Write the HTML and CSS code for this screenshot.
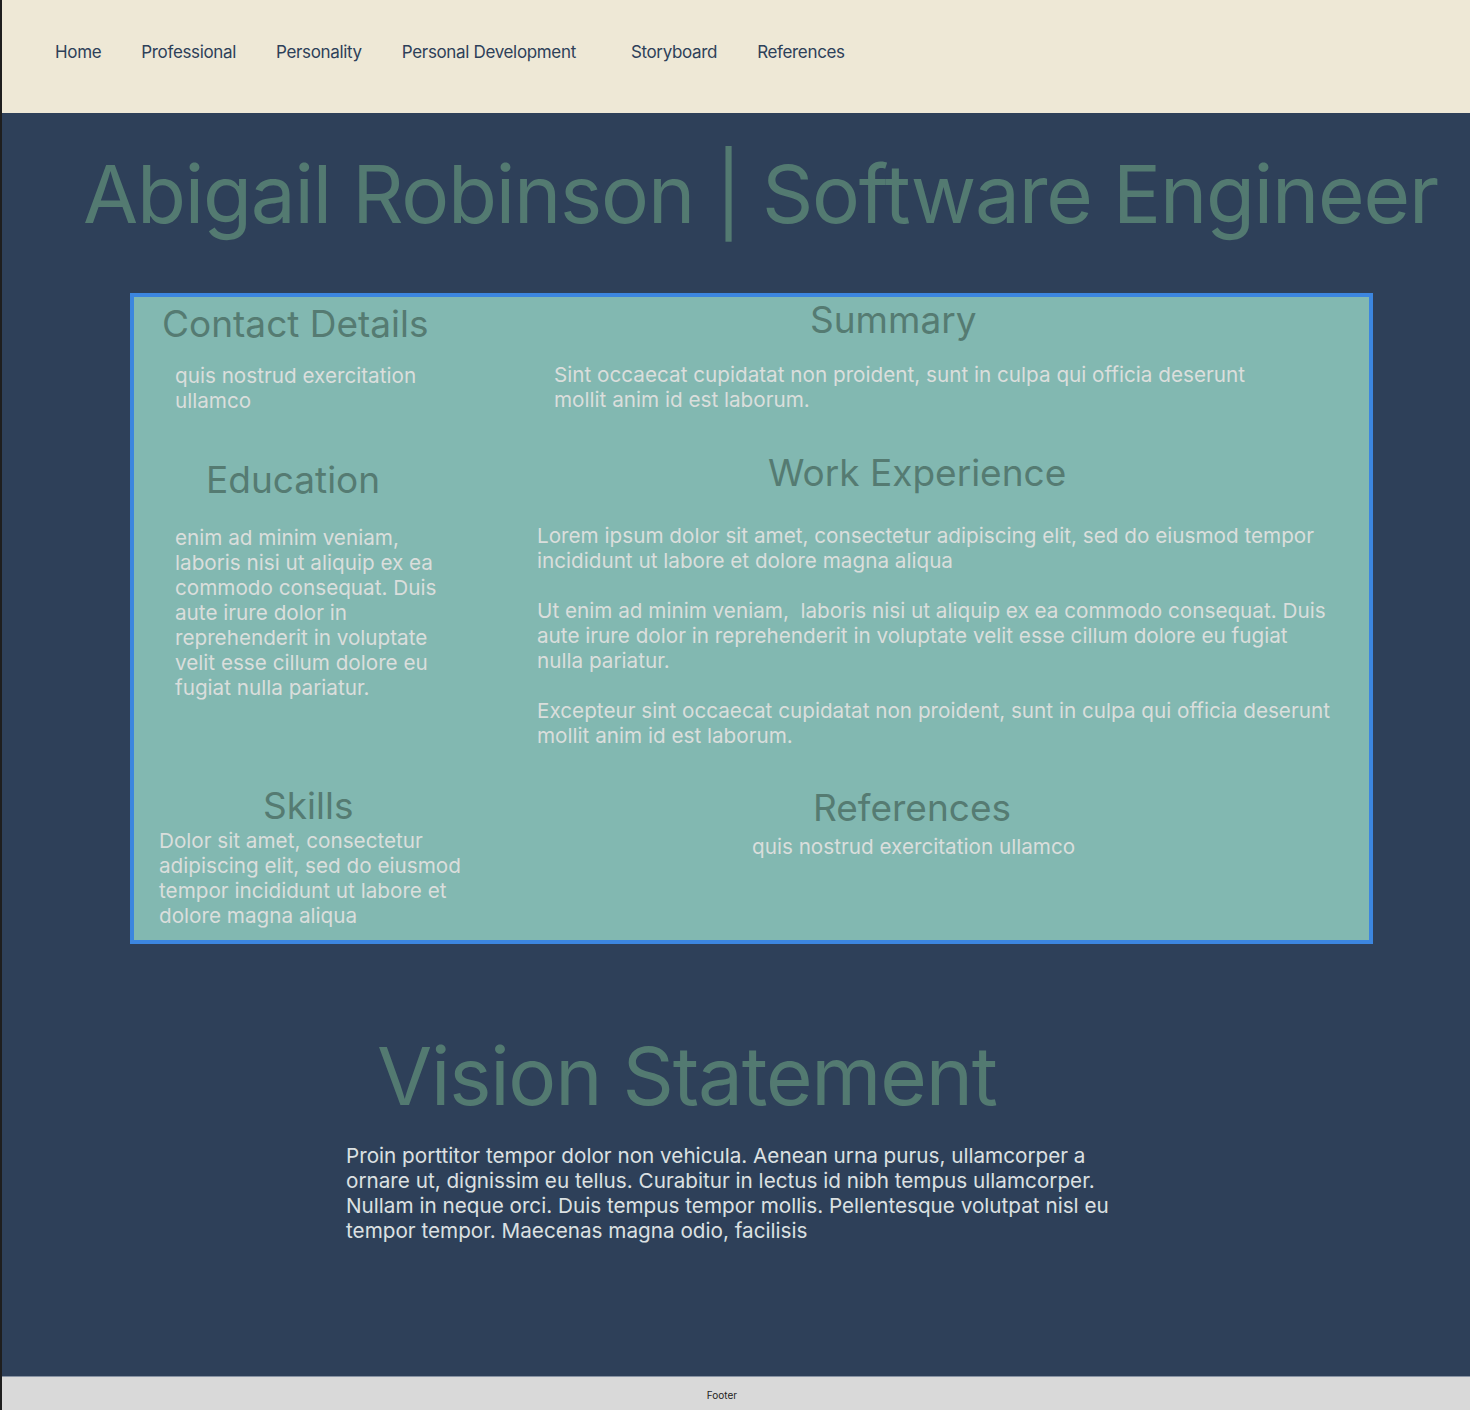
FILE: index.html
```html
<!DOCTYPE html>
<html lang="en">
<head>
<meta charset="utf-8">
<title>Abigail Robinson | Software Engineer</title>
<link rel="stylesheet" href="styles.css">
</head>
<body>
<div class="page">
  <nav class="nav">
    <a class="nav-link" href="#">Home</a>
    <a class="nav-link" href="#">Professional</a>
    <a class="nav-link" href="#">Personality</a>
    <a class="nav-link nav-link-wide" href="#">Personal Development</a>
    <a class="nav-link" href="#">Storyboard</a>
    <a class="nav-link" href="#">References</a>
  </nav>
  <main class="main">
    <h1 class="title">Abigail Robinson | Software Engineer</h1>
    <section class="card">
      <div class="col col-left">
        <h2 class="heading h-contact">Contact Details</h2>
        <p class="text t-contact">quis nostrud exercitation ullamco</p>
        <h2 class="heading h-education">Education</h2>
        <p class="text t-education">enim ad minim veniam, laboris nisi ut aliquip ex ea commodo consequat. Duis aute irure dolor in reprehenderit in voluptate velit esse cillum dolore eu fugiat nulla pariatur.</p>
        <h2 class="heading h-skills">Skills</h2>
        <p class="text t-skills">Dolor sit amet, consectetur adipiscing elit, sed do eiusmod tempor incididunt ut labore et dolore magna aliqua</p>
      </div>
      <div class="col col-right">
        <h2 class="heading h-summary">Summary</h2>
        <p class="text t-summary">Sint occaecat cupidatat non proident, sunt in culpa qui officia deserunt mollit anim id est laborum.</p>
        <h2 class="heading h-work">Work Experience</h2>
        <div class="t-work">
          <p class="text">Lorem ipsum dolor sit amet, consectetur adipiscing elit, sed do eiusmod tempor incididunt ut labore et dolore magna aliqua</p>
          <p class="text">Ut enim ad minim veniam,&nbsp; laboris nisi ut aliquip ex ea commodo consequat. Duis aute irure dolor in reprehenderit in voluptate velit esse cillum dolore eu fugiat nulla pariatur.</p>
          <p class="text">Excepteur sint occaecat cupidatat non proident, sunt in culpa qui officia deserunt mollit anim id est laborum.</p>
        </div>
        <h2 class="heading h-refs">References</h2>
        <p class="text t-refs">quis nostrud exercitation ullamco</p>
      </div>
    </section>
    <section class="vision">
      <h2 class="vision-title">Vision Statement</h2>
      <p class="vision-text">Proin porttitor tempor dolor non vehicula. Aenean urna purus, ullamcorper a ornare ut, dignissim eu tellus. Curabitur in lectus id nibh tempus ullamcorper. Nullam in neque orci. Duis tempus tempor mollis. Pellentesque volutpat nisl eu tempor tempor. Maecenas magna odio, facilisis</p>
    </section>
  </main>
  <footer class="footer">Footer</footer>
</div>
</body>
</html>
```
FILE: styles.css
```css
* { box-sizing: border-box; }

html, body {
  margin: 0;
  padding: 0;
}

body {
  background: #1e1e1e;
  font-family: Inter, "Noto Sans", "Liberation Sans", sans-serif;
}

.page {
  margin-left: 2px;
  width: 1468px;
}

/* Nav */
.nav {
  height: 113px;
  background: #EEE8D6;
  display: flex;
  align-items: flex-start;
  gap: 40px;
  padding: 42px 0 0 53px;
}

.nav-link {
  font-size: 17px;
  line-height: 21px;
  letter-spacing: -0.02em;
  color: #2D4059;
  text-decoration: none;
}

.nav-link-wide {
  margin-right: 15px;
}

/* Main */
.main {
  height: 1263px;
  background: #2E4059;
  padding-top: 33px;
  overflow: hidden;
}

.title {
  margin: 0;
  padding-left: 81px;
  font-size: 80px;
  line-height: 96px;
  letter-spacing: -0.015em;
  font-weight: 400;
  color: #537A71;
  white-space: nowrap;
}

/* Card */
.card {
  margin: 51px 0 0 128px;
  width: 1243px;
  height: 651px;
  border: 4px solid #3C86DF;
  background: #82B8B1;
  display: grid;
  grid-template-columns: 390px 1fr;
}

.col {
  display: flex;
  flex-direction: column;
  align-items: flex-start;
}

.heading {
  margin: 0;
  font-size: 37px;
  line-height: 47px;
  font-weight: 400;
  color: #557B72;
  white-space: nowrap;
}

.text {
  margin: 0;
  font-size: 20.7px;
  line-height: 25px;
  color: #DADEDC;
}

/* left column */
.h-contact { margin-top: 3px; padding-left: 28px; }
.t-contact { margin-top: 16px; padding-left: 41px; width: 321px; }
.h-education { margin-top: 43px; padding-left: 72px; }
.t-education { margin-top: 22px; padding-left: 41px; width: 321px; }
.h-skills { margin-top: 82px; padding-left: 129px; }
.t-skills { margin-top: -1px; padding-left: 25px; width: 345px; }

/* right column */
.h-summary { margin-top: -1px; padding-left: 286px; }
.t-summary { margin-top: 19px; padding-left: 30px; width: 760px; }
.h-work { margin-top: 37px; padding-left: 244px; }
.t-work { margin-top: 27px; padding-left: 13px; width: 810px; }
.t-work .text + .text { margin-top: 25px; }
.h-refs { margin-top: 36px; padding-left: 289px; }
.t-refs { margin-top: 3px; padding-left: 228px; }

/* Vision */
.vision {
  margin-top: 84px;
}

.vision-title {
  margin: 0;
  padding-left: 375px;
  font-size: 80px;
  line-height: 96px;
  letter-spacing: -0.015em;
  font-weight: 400;
  color: #537A71;
  white-space: nowrap;
}

.vision-text {
  margin: 19px 0 0 344px;
  width: 780px;
  font-size: 20.7px;
  line-height: 25px;
  color: #DCE0E2;
}

/* Footer */
.footer {
  height: 34px;
  border-top: 1px solid #8893A3;
  background: #D9D9D9;
  color: #1e1e1e;
  font-size: 10px;
  line-height: 30px;
  padding: 3px 28px 0 0;
  text-align: center;
}
```
